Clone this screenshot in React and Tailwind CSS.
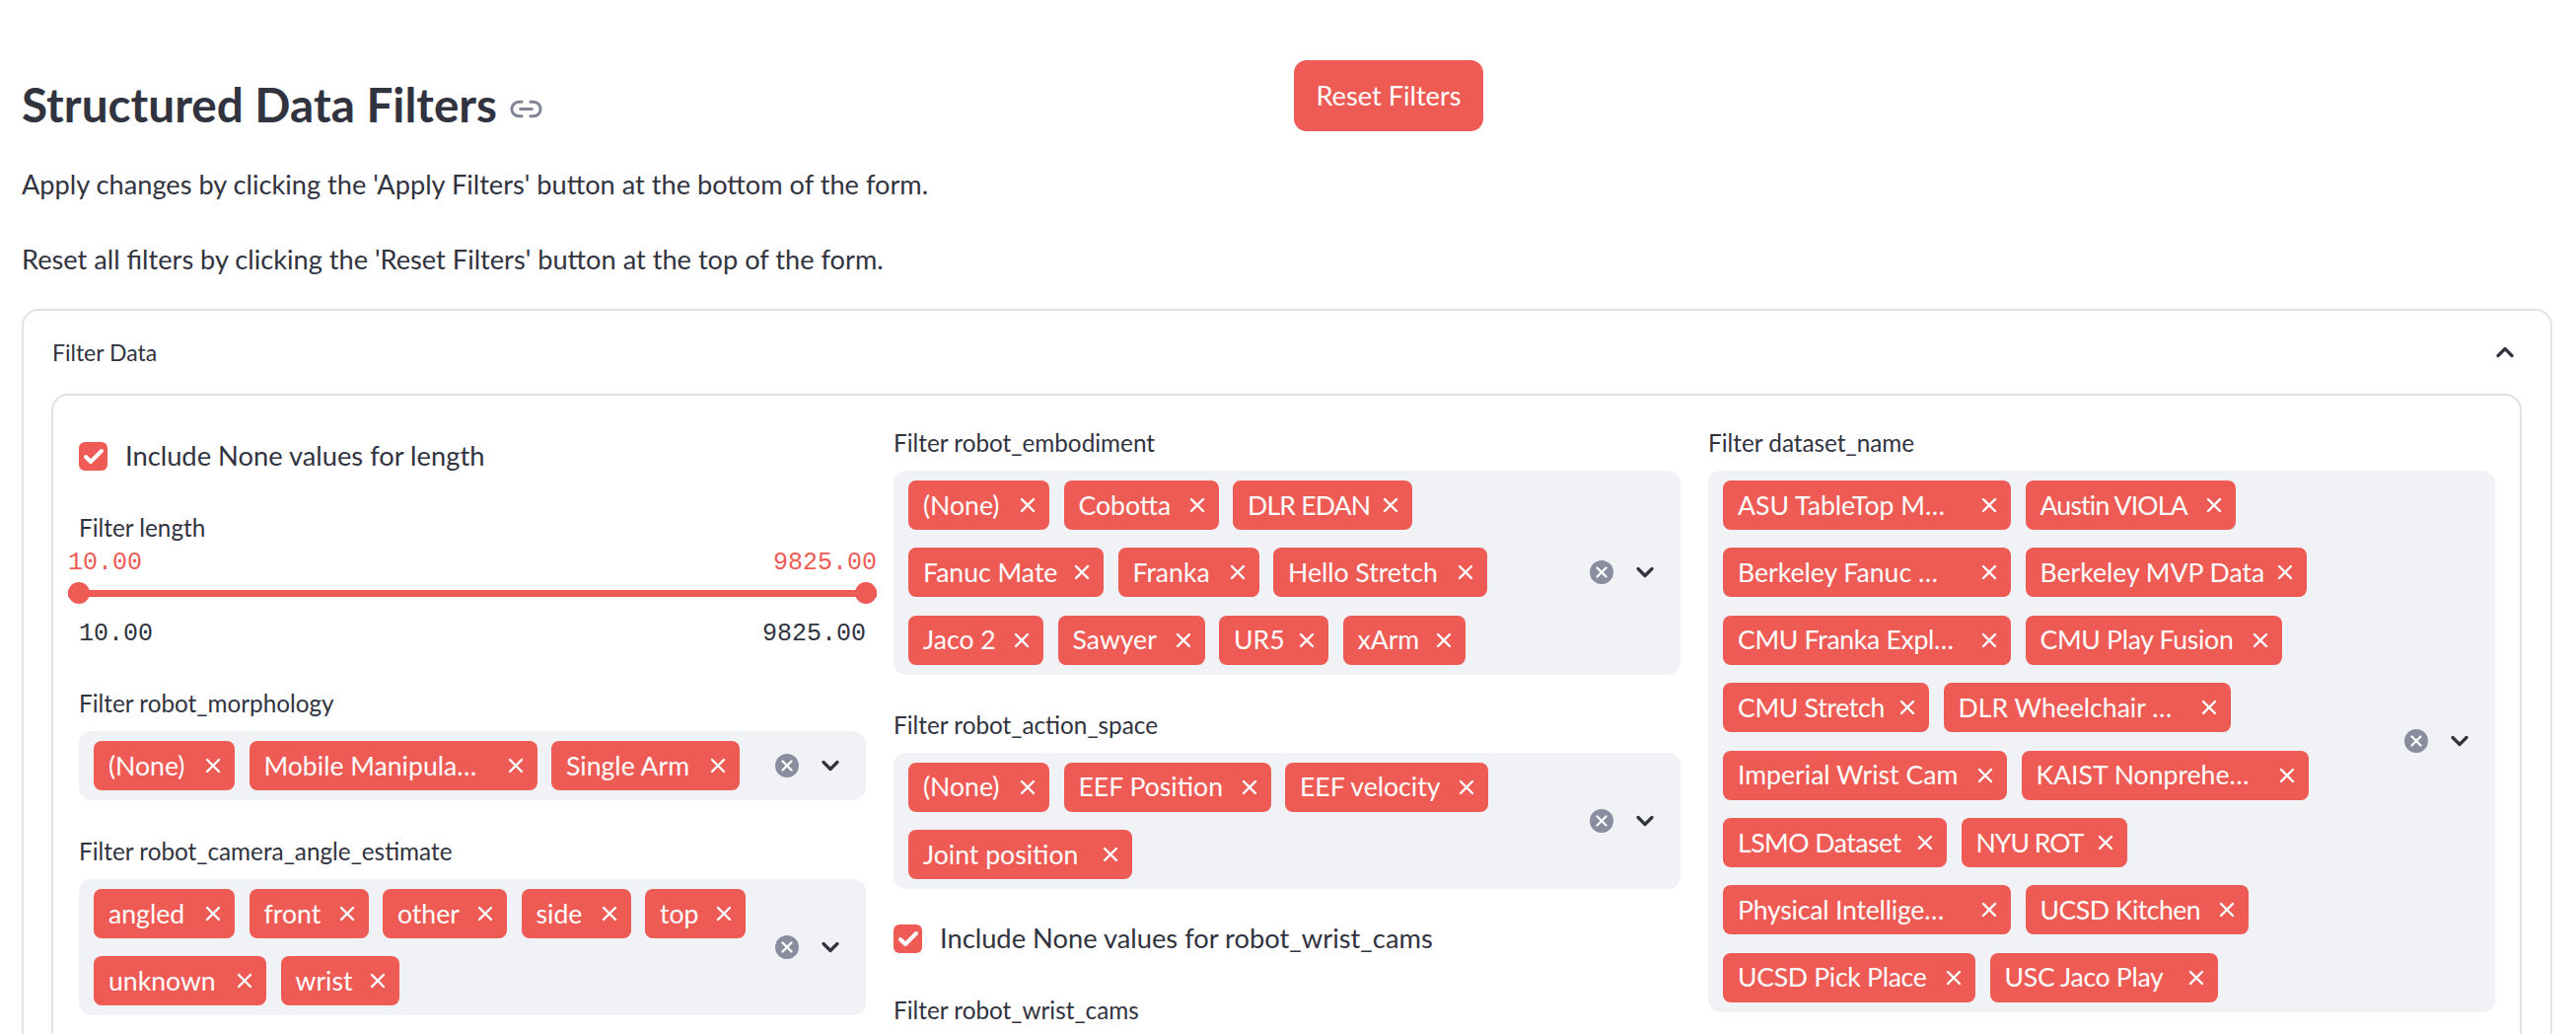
import { Check, ChevronDown, ChevronUp, Link2, X } from 'lucide-react';

const morphology = [
  { label: '(None)', w: 'w-[143px]' },
  { label: 'Mobile Manipula…', w: 'w-[292px]' },
  { label: 'Single Arm', w: 'w-[191px]' },
];

const cameraAngle = [
  { label: 'angled', w: 'w-[143px]' },
  { label: 'front', w: 'w-[121px]' },
  { label: 'other', w: 'w-[126px]' },
  { label: 'side', w: 'w-[111px]' },
  { label: 'top', w: 'w-[102px]' },
  { label: 'unknown', w: 'w-[175px]' },
  { label: 'wrist', w: 'w-[120px]' },
];

const embodiment = [
  { label: '(None)', w: 'w-[143px]' },
  { label: 'Cobotta', w: 'w-[157px]' },
  { label: 'DLR EDAN', w: 'w-[182px]', fit: 'tracking-[-0.8px]' },
  { label: 'Fanuc Mate', w: 'w-[198px]' },
  { label: 'Franka', w: 'w-[143px]' },
  { label: 'Hello Stretch', w: 'w-[217px]' },
  { label: 'Jaco 2', w: 'w-[137px]' },
  { label: 'Sawyer', w: 'w-[149px]' },
  { label: 'UR5', w: 'w-[111px]' },
  { label: 'xArm', w: 'w-[124px]' },
];

const actionSpace = [
  { label: '(None)', w: 'w-[143px]' },
  { label: 'EEF Position', w: 'w-[210px]' },
  { label: 'EEF velocity', w: 'w-[206px]' },
  { label: 'Joint position', w: 'w-[227px]' },
];

const datasets = [
  { label: 'ASU TableTop M…', w: 'w-[292px]' },
  { label: 'Austin VIOLA', w: 'w-[213px]', fit: 'tracking-[-0.8px]' },
  { label: 'Berkeley Fanuc …', w: 'w-[292px]' },
  { label: 'Berkeley MVP Data', w: 'w-[285px]' },
  { label: 'CMU Franka Expl…', w: 'w-[292px]', fit: 'tracking-[-0.3px]' },
  { label: 'CMU Play Fusion', w: 'w-[260px]', fit: 'tracking-[-0.3px]' },
  { label: 'CMU Stretch', w: 'w-[209px]', fit: 'tracking-[-0.3px]' },
  { label: 'DLR Wheelchair …', w: 'w-[291px]' },
  { label: 'Imperial Wrist Cam', w: 'w-[288px]' },
  { label: 'KAIST Nonprehe…', w: 'w-[291px]' },
  { label: 'LSMO Dataset', w: 'w-[227px]', fit: 'tracking-[-0.5px]' },
  { label: 'NYU ROT', w: 'w-[168px]', fit: 'tracking-[-1px]' },
  { label: 'Physical Intellige…', w: 'w-[292px]', fit: 'tracking-[-0.2px]' },
  { label: 'UCSD Kitchen', w: 'w-[226px]', fit: 'tracking-[-0.5px]' },
  { label: 'UCSD Pick Place', w: 'w-[256px]', fit: 'tracking-[-0.3px]' },
  { label: 'USC Jaco Play', w: 'w-[231px]', fit: 'tracking-[-0.3px]' },
];

function Tag({ label, w, fit }) {
  return (
    <span className={`${w} h-[50px] flex items-center justify-between pl-[15px] pr-[10px] rounded-[8px] bg-[#ee5b55] text-white text-[26.6px]`}>
      <span className={`whitespace-nowrap pt-[1px] ${fit || ''}`}>{label}</span>
      <X className="w-[24px] h-[24px] shrink-0" strokeWidth={2.4} />
    </span>
  );
}

function MultiSelect({ label, items }) {
  return (
    <div>
      <div className="h-[45px] text-[24.3px] leading-[33px]">{label}</div>
      <div className="flex items-center rounded-[13px] bg-[#f0f2f6]">
        <div className="flex-1 flex flex-wrap gap-x-[14.5px] gap-y-[18.4px] pl-[15px] py-[10px]">
          {items.map((item) => (
            <Tag key={item.label} {...item} />
          ))}
        </div>
        <div className="flex items-center gap-[18px] pr-[22px]">
          <span className="w-[24px] h-[24px] rounded-full bg-[#8a8d9e] flex items-center justify-center">
            <X className="w-[18px] h-[18px] text-white" strokeWidth={3} />
          </span>
          <ChevronDown className="w-[28px] h-[28px] text-[#31333f]" strokeWidth={2.8} />
        </div>
      </div>
    </div>
  );
}

function CheckRow({ label }) {
  return (
    <div className="flex items-center gap-[18px] h-[29px]">
      <span className="w-[29px] h-[29px] rounded-[6px] bg-[#ee5b55] flex items-center justify-center">
        <Check className="w-[24px] h-[24px] text-white" strokeWidth={4} />
      </span>
      <span className="text-[27.3px]">{label}</span>
    </div>
  );
}

function RangeSlider() {
  return (
    <div>
      <div className="h-[37px] text-[24.3px] leading-[33px]">Filter length</div>
      <div className="-mx-[11px] flex justify-between h-[32px] text-[25px] leading-[32px] text-[#ee5b55] font-['Liberation_Mono',monospace]">
        <span>10.00</span>
        <span>9825.00</span>
      </div>
      <div className="-mx-[11px] mt-[3px] flex items-center justify-between h-[22px] relative">
        <div className="absolute left-0 right-0 h-[7px] bg-[#ee5b55]" />
        <span className="relative w-[22px] h-[22px] rounded-full bg-[#ee5b55]" />
        <span className="relative w-[22px] h-[22px] rounded-full bg-[#ee5b55]" />
      </div>
      <div className="mt-[14px] flex justify-between h-[32px] text-[25px] leading-[33px] font-['Liberation_Mono',monospace]">
        <span>10.00</span>
        <span>9825.00</span>
      </div>
    </div>
  );
}

export default function App() {
  return (
    <div className="h-[1048px] overflow-hidden bg-white text-[#31333f] font-['Lato',sans-serif] pl-[22px] pr-[24px] pt-[61px]">
      {/* header */}
      <div className="flex items-start h-[72px]">
        <div className="w-[1290px] flex items-center gap-[12px] h-[92px]">
          <h1 className="self-start text-[47.7px] font-bold leading-[89px]">Structured Data Filters</h1>
          <Link2 className="w-[35px] h-[35px] text-[#808495] mt-[6px]" />
        </div>
        <button className="w-[192px] h-[72px] rounded-[13px] bg-[#ee5b55] text-white text-[27.2px]">
          Reset Filters
        </button>
      </div>

      <p className="mt-[36px] h-[36px] text-[27.2px] leading-[36px]">
        Apply changes by clicking the 'Apply Filters' button at the bottom of the form.
      </p>
      <p className="mt-[40px] h-[36px] text-[27.2px] leading-[36px]">
        Reset all filters by clicking the 'Reset Filters' button at the top of the form.
      </p>

      {/* expander */}
      <div className="mt-[32px] border-2 border-[#e2e2e5] rounded-[17px] h-[900px]">
        <div className="h-[84px] flex items-center justify-between pl-[29px] pr-[32px]">
          <span className="text-[23px]">Filter Data</span>
          <ChevronUp className="w-[28px] h-[28px]" strokeWidth={2.8} />
        </div>

        <div className="ml-[28px] mr-[29px] border-2 border-[#e2e2e5] rounded-[17px] pt-[31px] pl-[26px] pr-[25px] grid grid-cols-3 gap-x-[28px] h-[800px]">
          <div className="flex flex-col">
            <div className="mt-[16px] mb-[41px]">
              <CheckRow label="Include None values for length" />
            </div>
            <RangeSlider />
            <div className="mt-[38px]">
              <MultiSelect label="Filter robot_morphology" items={morphology} />
            </div>
            <div className="mt-[35px]">
              <MultiSelect label="Filter robot_camera_angle_estimate" items={cameraAngle} />
            </div>
          </div>

          <div className="flex flex-col">
            <MultiSelect label="Filter robot_embodiment" items={embodiment} />
            <div className="mt-[34px]">
              <MultiSelect label="Filter robot_action_space" items={actionSpace} />
            </div>
            <div className="mt-[36px]">
              <CheckRow label="Include None values for robot_wrist_cams" />
            </div>
            <div className="mt-[41px] h-[45px] text-[24.3px] leading-[33px]">Filter robot_wrist_cams</div>
          </div>

          <div>
            <MultiSelect label="Filter dataset_name" items={datasets} />
          </div>
        </div>
      </div>
    </div>
  );
}
